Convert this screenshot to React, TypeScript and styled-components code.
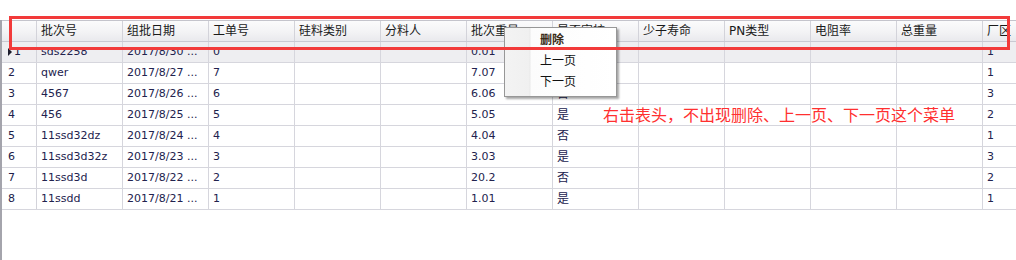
import styled, { createGlobalStyle } from "styled-components";

const GlobalStyle = createGlobalStyle`
  html, body {
    margin: 0;
    padding: 0;
    background: #ffffff;
    overflow: hidden;
  }
`;

const columns = [
  "批次号",
  "组批日期",
  "工单号",
  "硅料类别",
  "分料人",
  "批次重量",
  "是否审核",
  "少子寿命",
  "PN类型",
  "电阻率",
  "总重量",
  "厂区",
];

type RowData = {
  batch: string;
  date: string;
  order: string;
  weight: string;
  audited: string;
  plant: string;
};

// rows 1-2: the audited value sits under the context menu
const rows: RowData[] = [
  { batch: "sds2258", date: "2017/8/30 ...", order: "0", weight: "0.01", audited: "", plant: "1" },
  { batch: "qwer", date: "2017/8/27 ...", order: "7", weight: "7.07", audited: "", plant: "1" },
  { batch: "4567", date: "2017/8/26 ...", order: "6", weight: "6.06", audited: "否", plant: "3" },
  { batch: "456", date: "2017/8/25 ...", order: "5", weight: "5.05", audited: "是", plant: "2" },
  { batch: "11ssd32dz", date: "2017/8/24 ...", order: "4", weight: "4.04", audited: "否", plant: "1" },
  { batch: "11ssd3d32z", date: "2017/8/23 ...", order: "3", weight: "3.03", audited: "是", plant: "3" },
  { batch: "11ssd3d", date: "2017/8/22 ...", order: "2", weight: "20.2", audited: "否", plant: "2" },
  { batch: "11ssdd", date: "2017/8/21 ...", order: "1", weight: "1.01", audited: "是", plant: "1" },
];

const App = () => {
  return (
    <>
      <GlobalStyle />
      <Page>
        <Grid>
          <HeaderRow>
            <RowHeaderCell />
            {columns.map((c) => (
              <HeaderCell key={c}>{c}</HeaderCell>
            ))}
          </HeaderRow>
          {rows.map((r, i) => (
            <Row key={r.batch} selected={i === 0}>
              <RowHeaderCell>
                {i === 0 && <Indicator />}
                <RowNumber current={i === 0}>{i + 1}</RowNumber>
              </RowHeaderCell>
              <Cell>{r.batch}</Cell>
              <Cell>{r.date}</Cell>
              <Cell>{r.order}</Cell>
              <Cell />
              <Cell />
              <Cell>{r.weight}</Cell>
              <Cell cjk>{r.audited}</Cell>
              <Cell />
              <Cell />
              <Cell />
              <Cell />
              <Cell>{r.plant}</Cell>
            </Row>
          ))}
        </Grid>

        <ContextMenu>
          <MenuItem strong>删除</MenuItem>
          <MenuItem>上一页</MenuItem>
          <MenuItem>下一页</MenuItem>
        </ContextMenu>

        <Highlight />
        <Note>右击表头，不出现删除、上一页、下一页这个菜单</Note>
      </Page>
    </>
  );
};

export default App;

const Page = styled.div`
  position: relative;
  width: 1016px;
  height: 260px;
  padding-top: 20px;
  box-sizing: border-box;
  overflow: hidden;
  font-family: "DejaVu Sans", "Noto Sans CJK SC", sans-serif;
`;

const Grid = styled.div`
  width: 1100px;
  height: 240px;
  border-left: 2px solid #a4a4ac;
  box-sizing: border-box;
  display: flex;
  flex-direction: column;
`;

const HeaderRow = styled.div`
  display: flex;
  height: 22px;
  box-sizing: border-box;
  border-top: 1px solid #c4c4cc;
  border-bottom: 1px solid #c9c9d2;
  background: linear-gradient(to bottom, #fbfbfc 0%, #f3f3f5 55%, #e9e9ed 100%);
`;

const HeaderCell = styled.div`
  width: 86px;
  flex: none;
  box-sizing: border-box;
  border-right: 1px solid #d3d3da;
  padding-left: 4px;
  font-size: 12px;
  line-height: 20px;
  color: #1a1a1a;
  white-space: nowrap;
  overflow: hidden;
`;

const Row = styled.div<{ selected?: boolean }>`
  display: flex;
  height: 21px;
  box-sizing: border-box;
  border-bottom: 1px solid #d6d6dd;
  background: ${({ selected }) => (selected ? "#eeeef1" : "#ffffff")};
`;

const RowHeaderCell = styled.div`
  position: relative;
  width: 35px;
  flex: none;
  box-sizing: border-box;
  border-right: 1px solid #d3d3da;
  display: flex;
  align-items: center;
`;

const Indicator = styled.span`
  position: absolute;
  left: 6px;
  top: 6px;
  width: 0;
  height: 0;
  border-top: 4px solid transparent;
  border-bottom: 4px solid transparent;
  border-left: 4px solid #1c1c2c;
`;

const RowNumber = styled.span<{ current?: boolean }>`
  padding-left: ${({ current }) => (current ? "12px" : "6px")};
  font-size: 11px;
  line-height: 20px;
  color: #20204a;
`;

const Cell = styled.div<{ cjk?: boolean }>`
  width: 86px;
  flex: none;
  box-sizing: border-box;
  border-right: 1px solid #d6d6dd;
  padding-left: 4px;
  font-size: ${({ cjk }) => (cjk ? "12px" : "11px")};
  line-height: 20px;
  color: #22224e;
  white-space: nowrap;
  overflow: hidden;
`;

const ContextMenu = styled.div`
  position: absolute;
  left: 504px;
  top: 27px;
  width: 113px;
  height: 70px;
  box-sizing: border-box;
  padding: 2px 2px 3px 2px;
  border: 1px solid #979797;
  background: linear-gradient(
    to right,
    #f3f3f3 0px,
    #f0f0f0 24px,
    #e9e9e9 25px,
    #fcfcfc 26px,
    #ffffff 100%
  );
  box-shadow: 2px 2px 2px rgba(0, 0, 0, 0.35);
  display: flex;
  flex-direction: column;
`;

const MenuItem = styled.div<{ strong?: boolean }>`
  height: 21px;
  padding-left: 33px;
  font-size: 12px;
  line-height: 21px;
  color: ${({ strong }) => (strong ? "#3a2c18" : "#111111")};
  font-weight: ${({ strong }) => (strong ? 700 : 400)};
`;

const Highlight = styled.div`
  position: absolute;
  left: 9px;
  top: 16px;
  width: 1001px;
  height: 34px;
  box-sizing: border-box;
  border: 3px solid #f23a3a;
`;

const Note = styled.div`
  position: absolute;
  left: 603px;
  top: 105px;
  font-family: "Noto Sans CJK SC", sans-serif;
  font-size: 16px;
  line-height: 18px;
  color: #ff3030;
  white-space: nowrap;
`;
